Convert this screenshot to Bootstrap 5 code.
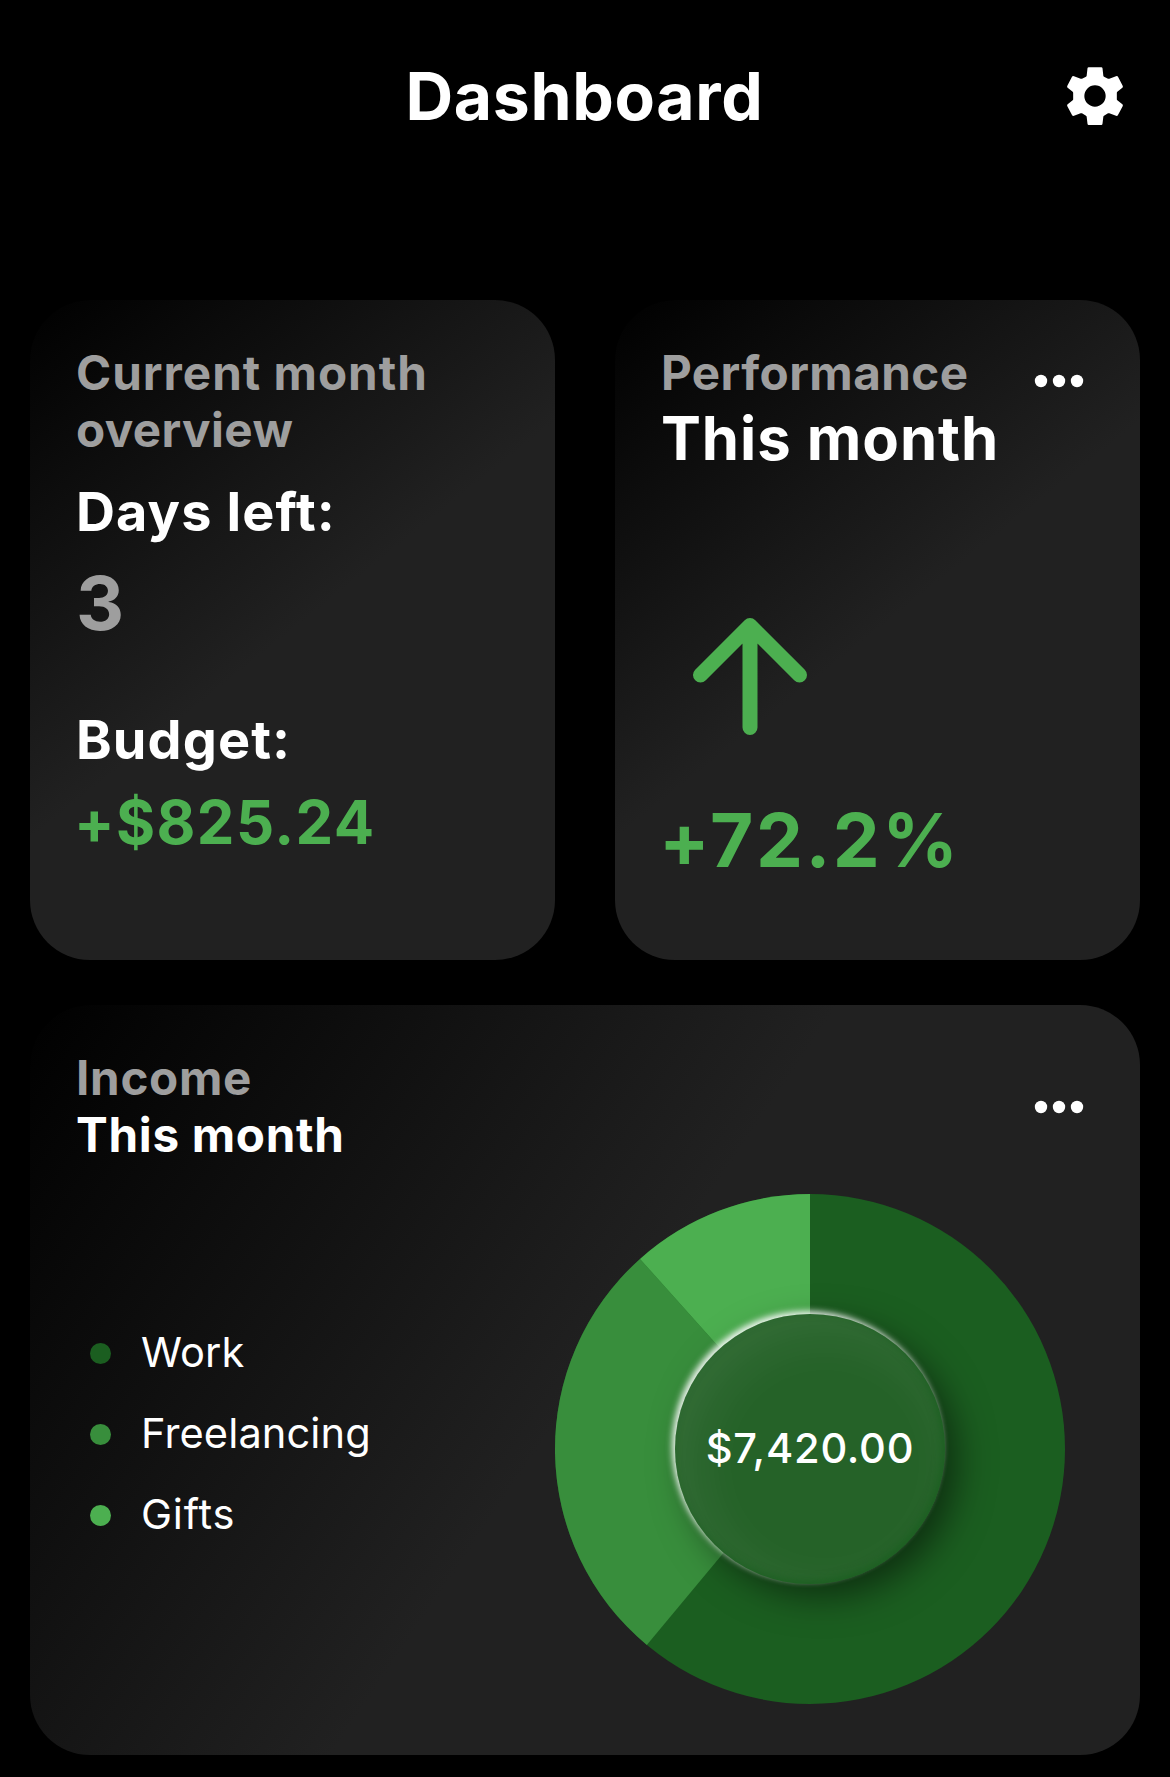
<!DOCTYPE html>
<html lang="en">
<head>
<meta charset="utf-8">
<meta name="viewport" content="width=device-width, initial-scale=1">
<title>Dashboard</title>
<link href="https://cdn.jsdelivr.net/npm/bootstrap@5.3.0/dist/css/bootstrap.min.css" rel="stylesheet">
<style>
body{background:#000;color:#fff;font-family:Inter,"Liberation Sans",sans-serif}
.screen{width:1170px;height:1777px;padding:0 30px;overflow:hidden}
.topbar{height:300px;padding-top:53px}
.topbar .side{width:90px;height:86px;padding-right:15px}
.title{font-size:66px;line-height:86px;letter-spacing:.7px;padding-right:1px}
.panel{border-radius:60px;background-color:#212121;padding:45px 45px 45px 46px}
.panel-sm{width:525px;height:660px;background-image:linear-gradient(141.5deg,#000 0%,#212121 50%)}
.panel-lg{height:750px;margin-top:45px;background-image:linear-gradient(124.05deg,#000 0%,#212121 50%)}
.t48{font-size:47.6px;line-height:56.5px;letter-spacing:.7px}
.t54{font-size:54px;line-height:64px;letter-spacing:1.1px}
.t60{font-size:59.8px;line-height:72px;letter-spacing:.95px}
.t75{font-size:74.6px;line-height:90px;letter-spacing:2.5px}
.wide{letter-spacing:1px}
.tight{letter-spacing:.4px}
.dim{color:#9e9e9e}
.up{color:#4caf50}
.money{letter-spacing:1.4px}
.signed{margin-left:-2px}
.days-label{margin-top:22px}
.days-value{margin-top:14px}
.budget-label{margin-top:60px}
.budget-value{margin-top:14px}
.trend{margin:126.500px 0 45px 14px}
.breakdown{margin-top:31px;padding-right:30px}
.legend-list{margin-bottom:30px;padding-left:14px}
.legend-item{height:81px;gap:30px;font-size:41.6px;letter-spacing:.1px;line-height:50px}
.legend-item span{margin-bottom:2px}
.bullet{width:21px;height:21px;border-radius:50%}
.c-work{background:#1b5e20}
.c-free{background:#388e3c}
.c-gift{background:#4caf50}
.c-gift + span{letter-spacing:.8px}
.donut{width:510px;height:510px}
.hub{width:270px;height:270px;padding-bottom:2px;background:#256228;font-size:41.6px;font-weight:500;letter-spacing:.75px;
box-shadow:-3px -3px 6px rgba(255,255,255,.9),12px 12px 36px rgba(0,0,0,.5),inset -3px -3px 9px rgba(27,94,32,.9),inset 15px 15px 60px rgba(255,255,255,.08)}
</style>
</head>
<body>
<main class="screen">
  <header class="topbar d-flex justify-content-between align-items-start">
    <div class="side"></div>
    <h1 class="title fw-bold m-0">Dashboard</h1>
    <div class="side d-flex justify-content-end align-items-center">
      <svg width="60" height="60" viewBox="9 11 180 180" fill="#fff" fill-rule="evenodd" role="img" aria-label="Settings">
        <path d="M80 15H118Q121 15 121.500 18L124 40Q124 42 126 43L138 49Q140 50 142 49L162 42Q166 40 168 43.500L182 70Q184 74 181 76L166 88Q164 90 164.500 93V109Q164 112 166 114L181 126Q184 128 182 132L168 158Q166 162 162 160.500L142 153Q140 152 138 153L126 160Q124 161 124 163L121.500 184Q121 188 118 188H80Q77 188 76.500 184L74 163Q74 161 72 160L60 153Q58 152 56 153L36 160.500Q32 162 30 158L16 132Q14 128 17 126L32 114Q34 112 33.500 109V93Q34 90 32 88L17 76Q14 74 16 70L30 43.500Q32 40 36 42L56 49Q58 50 60 49L72 43Q74 42 74 40L76.500 18Q77 15 80 15ZM99 69A32 32 0 1 0 99 133A32 32 0 1 0 99 69Z"/>
      </svg>
    </div>
  </header>

  <section class="d-flex justify-content-between">
    <article class="panel panel-sm d-flex flex-column align-items-start fw-bold">
      <span class="t48 wide dim">Current month</span>
      <span class="t48 tight dim">overview</span>
      <span class="t54 days-label">Days left:</span>
      <span class="t75 dim days-value">3</span>
      <span class="t54 budget-label">Budget:</span>
      <span class="t60 money up signed budget-value">+$825.24</span>
    </article>
    <article class="panel panel-sm d-flex flex-column align-items-start fw-bold">
      <div class="d-flex justify-content-between w-100">
        <span class="t48 tight dim">Performance</span>
        <svg width="66" height="56" fill="#fff" role="img" aria-label="More"><circle cx="12" cy="36" r="6.200"/><circle cx="30" cy="36" r="6.200"/><circle cx="48" cy="36" r="6.200"/></svg>
      </div>
      <span class="t60">This month</span>
      <svg class="trend" width="150" height="150" fill="none" stroke="#4caf50" stroke-width="15" stroke-linecap="round" stroke-linejoin="round"><path d="M25.500 75L75 25.500L124.500 75M75 27V127.500"/></svg>
      <span class="t75 up signed">+72.2%</span>
    </article>
  </section>

  <section class="panel panel-lg">
    <div class="d-flex justify-content-between align-items-center fw-bold">
      <div class="d-flex flex-column">
        <span class="t48 dim">Income</span>
        <span class="t48">This month</span>
      </div>
      <svg width="66" height="57" fill="#fff" role="img" aria-label="More"><circle cx="12" cy="29" r="6.200"/><circle cx="30" cy="29" r="6.200"/><circle cx="48" cy="29" r="6.200"/></svg>
    </div>
    <div class="breakdown d-flex justify-content-between align-items-center">
      <ul class="legend-list list-unstyled">
        <li class="legend-item d-flex align-items-center"><i class="bullet c-work"></i><span>Work</span></li>
        <li class="legend-item d-flex align-items-center"><i class="bullet c-free"></i><span>Freelancing</span></li>
        <li class="legend-item d-flex align-items-center"><i class="bullet c-gift"></i><span>Gifts</span></li>
      </ul>
      <div class="donut position-relative">
        <svg class="d-block" width="510" height="510">
          <circle cx="255" cy="255" r="255" fill="#1b5e20"/>
          <path fill="#388e3c" d="M255 255L91.800 450.900A255 255 0 0 1 85 64.900Z"/>
          <path fill="#4caf50" d="M255 255L85 64.900A255 255 0 0 1 255 0Z"/>
        </svg>
        <div class="hub rounded-circle position-absolute top-50 start-50 translate-middle d-flex justify-content-center align-items-center">$7,420.00</div>
      </div>
    </div>
  </section>
</main>
<script src="https://cdn.jsdelivr.net/npm/bootstrap@5.3.0/dist/js/bootstrap.bundle.min.js"></script>
</body>
</html>
